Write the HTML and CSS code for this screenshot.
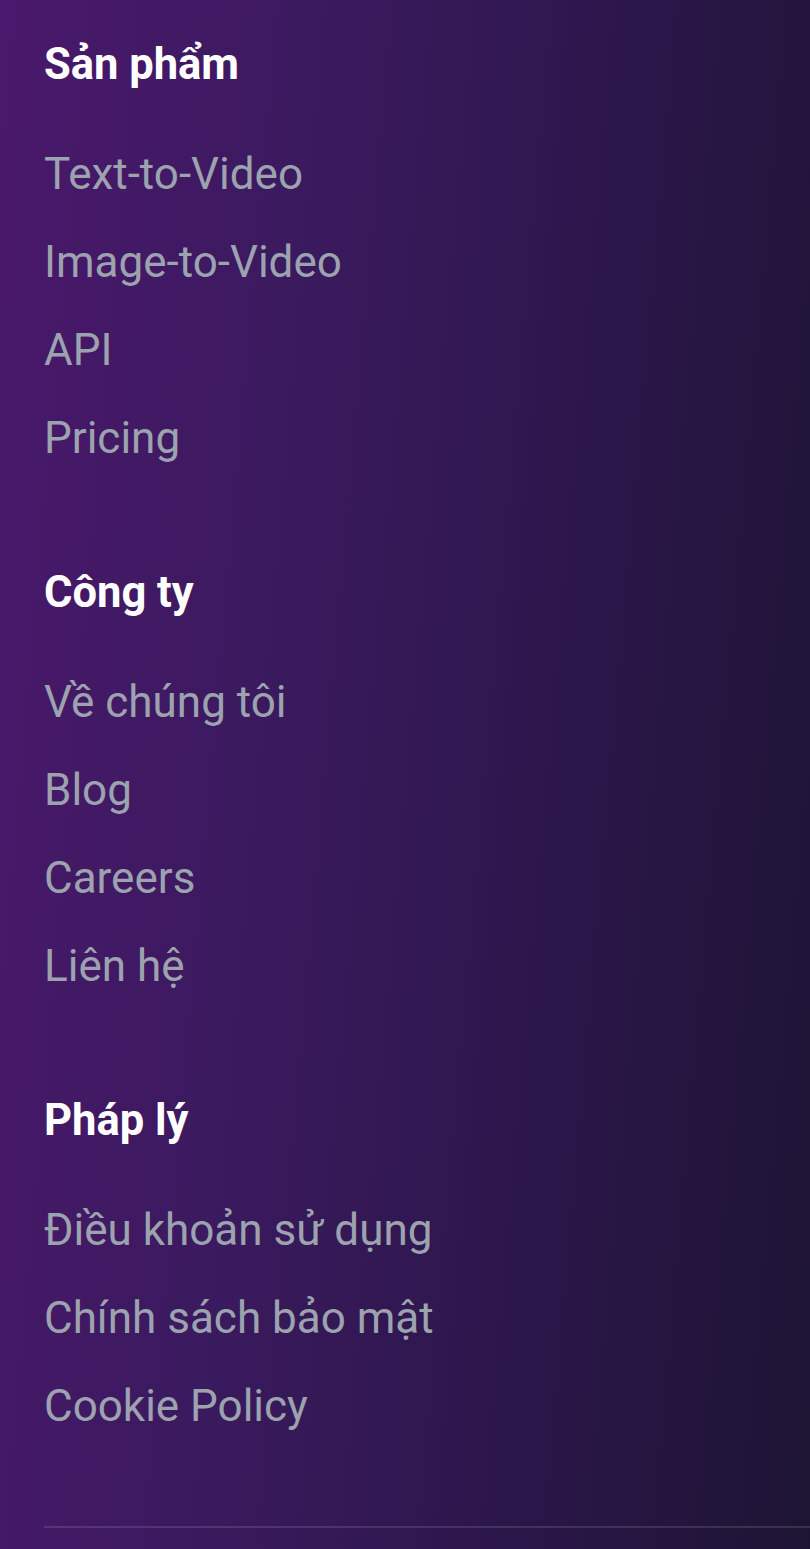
FILE: index.html
```html
<!DOCTYPE html>
<html lang="vi">
<head>
<meta charset="utf-8">
<link rel="stylesheet" href="styles.css">
</head>
<body>
<footer class="footer">
  <div class="cols">
    <section class="col">
      <h3 class="col-title">Sản phẩm</h3>
      <ul class="links">
        <li><a href="#">Text-to-Video</a></li>
        <li><a href="#">Image-to-Video</a></li>
        <li><a href="#">API</a></li>
        <li><a href="#">Pricing</a></li>
      </ul>
    </section>
    <section class="col">
      <h3 class="col-title">Công ty</h3>
      <ul class="links">
        <li><a href="#">Về chúng tôi</a></li>
        <li><a href="#">Blog</a></li>
        <li><a href="#">Careers</a></li>
        <li><a href="#">Liên hệ</a></li>
      </ul>
    </section>
    <section class="col">
      <h3 class="col-title">Pháp lý</h3>
      <ul class="links">
        <li><a href="#">Điều khoản sử dụng</a></li>
        <li><a href="#">Chính sách bảo mật</a></li>
        <li><a href="#">Cookie Policy</a></li>
      </ul>
    </section>
  </div>
  <div class="divider"></div>
</footer>
</body>
</html>
```

FILE: styles.css
```css
html, body {
  margin: 0;
  padding: 0;
}
body {
  font-family: Roboto, "Noto Sans", sans-serif;
  min-height: 1549px;
  background: linear-gradient(95deg, #4a186c 0%, #3a1a5e 35%, #2a1648 70%, #1d1433 100%);
}
.footer {
  padding: 41px 0 0 44px;
}
.cols {
  display: flex;
  flex-direction: column;
  gap: 103px;
}
.col-title {
  margin: 0 0 57px 0;
  font-size: 43.5px;
  line-height: 48px;
  font-weight: 700;
  color: #ffffff;
}
.links {
  list-style: none;
  margin: 0;
  padding: 0;
  display: flex;
  flex-direction: column;
  gap: 32px;
}
.links a {
  display: block;
  font-size: 44px;
  line-height: 56px;
  color: #9ca3af;
  text-decoration: none;
}
.divider {
  margin-top: 92px;
  height: 2px;
  background: rgba(255, 255, 255, 0.12);
}
```
